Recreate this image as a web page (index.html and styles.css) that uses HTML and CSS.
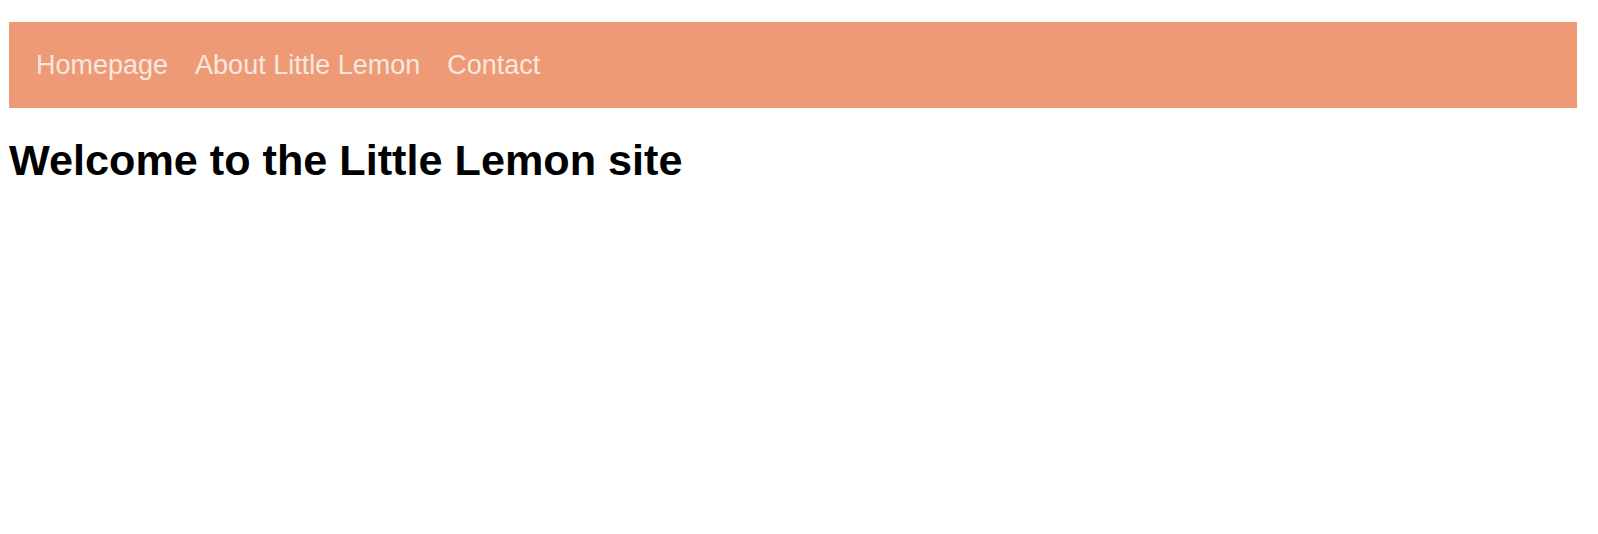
FILE: index.html
```html
<!DOCTYPE html>
<html lang="en">
<head>
<meta charset="utf-8">
<title>Little Lemon</title>
<link rel="stylesheet" href="styles.css">
</head>
<body>
<nav class="nav">
  <a class="nav-link" href="#">Homepage</a>
  <a class="nav-link" href="#">About Little Lemon</a>
  <a class="nav-link" href="#">Contact</a>
</nav>
<h1 class="title">Welcome to the Little Lemon site</h1>
</body>
</html>
```
FILE: styles.css
```css
body {
  margin: 8px 8px 8px 9px;
  font-family: "Liberation Sans", Arial, sans-serif;
  background: #ffffff;
}
.nav {
  margin: 14px 13px 0 0;
  padding: 28px 27px;
  background: #ef9a76;
  display: flex;
  gap: 27px;
}
.nav-link {
  color: #f7e8de;
  text-decoration: none;
  font-size: 27px;
  line-height: 30px;
}
.title {
  margin: 28px 0;
  font-size: 43.2px;
  font-weight: bold;
  color: #000;
}
```
